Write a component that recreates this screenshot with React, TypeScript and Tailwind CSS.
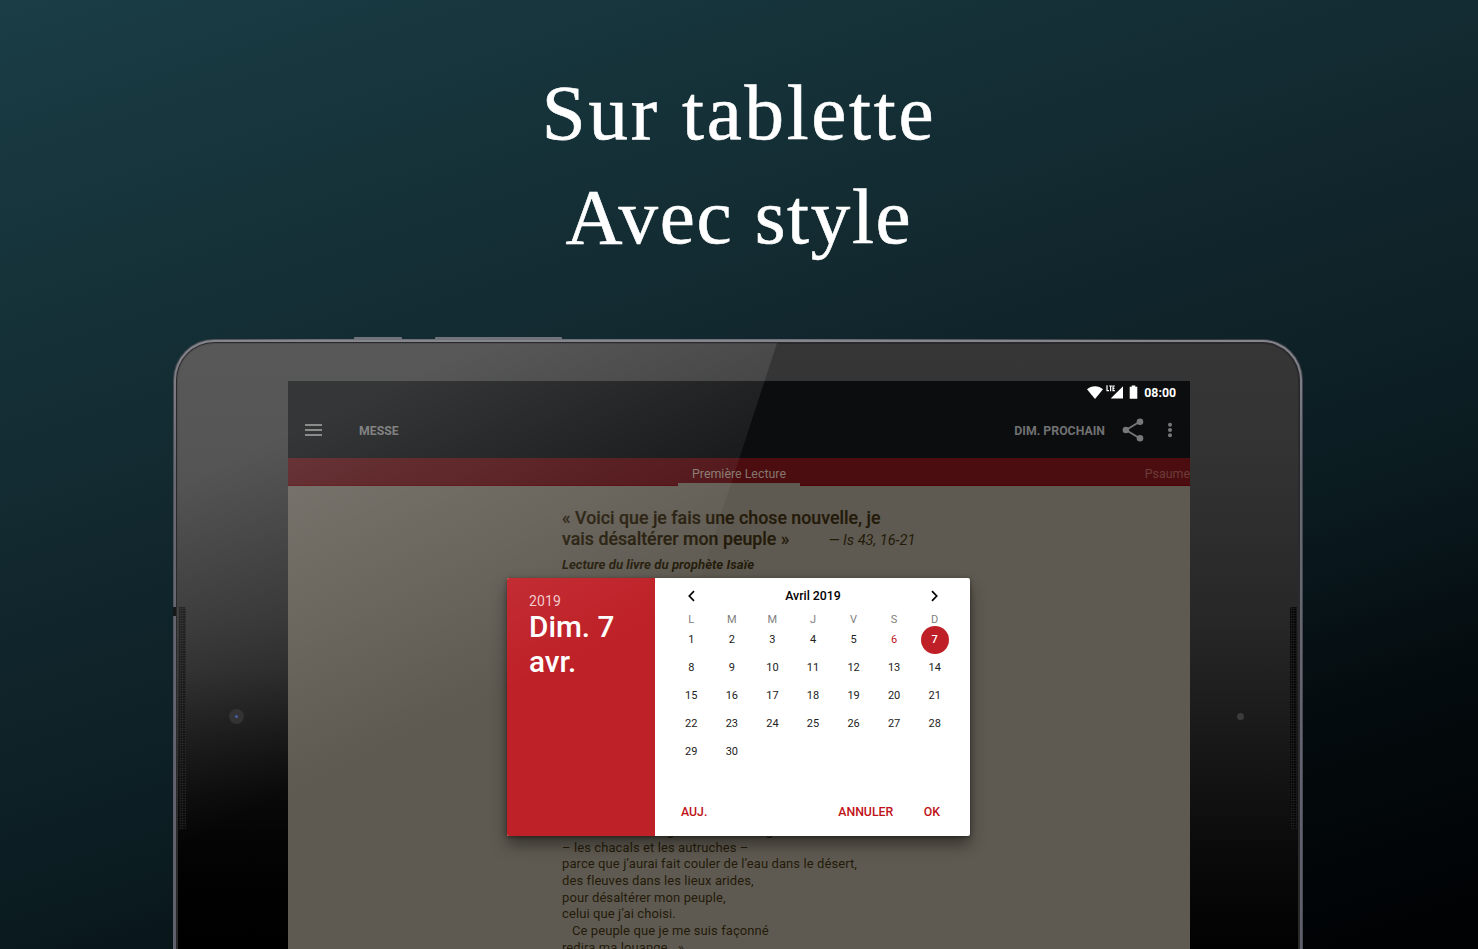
import React from "react";

const WEEKDAYS = ["L", "M", "M", "J", "V", "S", "D"];
const DAYS = Array.from({ length: 30 }, (_, i) => i + 1);

function dayClass(day: number) {
  if (day === 7) return "bg-[#bf2028] text-white font-medium";
  if (day === 6) return "text-[#bf2028]";
  return "text-[#222222]";
}

function StatusBar() {
  return (
    <div className="flex h-[22px] shrink-0 items-center justify-end pr-[14px] text-white">
      <svg className="mr-[3px] h-[13px] w-[16px]" viewBox="0 0 16 13" fill="currentColor">
        <path d="M0 3.2C2.3 1.2 5 .2 8 .2s5.700 1 8 3L8 13z" />
      </svg>
      <svg className="mr-[5px] h-[14px] w-[18px]" viewBox="0 0 18 14" fill="currentColor">
        <path d="M17 1.200V13.500H4.700z" />
        <path d="M0 0H9V7H0z" fill="#0c0d0e" />
        <path d="M1 .3V5.700H3M3.200 1H6M4.600 1V6.200M8.800 1H7V5.700H8.800M7 3.400H8.500" fill="none" stroke="currentColor" strokeWidth="1.200" />
      </svg>
      <svg className="mr-[6px] h-[14px] w-[9px]" viewBox="0 0 9 14" fill="currentColor">
        <path d="M2.700.4H6.300V1.700H8.300V13.300Q8.300 13.800 7.800 13.800H1.200Q.7 13.800.7 13.300V1.700H2.700z" />
      </svg>
      <span className="pt-px text-[12.300px] font-bold leading-[14px]">08:00</span>
    </div>
  );
}

function Toolbar() {
  return (
    <div className="flex h-[55px] shrink-0 items-center pl-[17px] pr-[17px] text-[12.300px] font-bold text-[#707172]">
      <svg className="mb-px h-[12px] w-[17px]" viewBox="0 0 17 12" fill="#737474">
        <path d="M0 0H17V2H0zM0 5H17V7H0zM0 10H17V12H0z" />
      </svg>
      <span className="ml-[37px] pt-[2px] text-[#6b6c6c]">MESSE</span>
      <span className="ml-auto pt-[2px]">DIM. PROCHAIN</span>
      <svg className="mb-px ml-[17px] h-[24px] w-[22px]" viewBox="0 0 22 24">
        <path d="M18 3.600 4 12 18 20.400" fill="none" stroke="#77787a" strokeWidth="1.800" />
        <circle cx="18" cy="3.700" r="3.300" fill="#77787a" />
        <circle cx="3.900" cy="12" r="3.300" fill="#77787a" />
        <circle cx="18" cy="20.300" r="3.300" fill="#77787a" />
      </svg>
      <svg className="mb-px ml-[23px] h-[16px] w-[6px]" viewBox="0 0 6 16" fill="#77787a">
        <circle cx="3" cy="2.800" r="2" />
        <circle cx="3" cy="8" r="2" />
        <circle cx="3" cy="13.200" r="2" />
      </svg>
    </div>
  );
}

function Tabs() {
  return (
    <div className="grid h-[28px] shrink-0 grid-cols-[390px_122px_1fr] overflow-hidden bg-[#4b0d10] text-[12.400px] leading-[31px]">
      <span className="h-[28px] border-b border-[#4f0005]" />
      <span className="h-[28px] border-b-[3px] border-[#5f5a51] text-center text-[#85766d]">Première Lecture</span>
      <span className="h-[28px] border-b border-[#4f0005] text-right text-[#6b3c38]">Psaume</span>
    </div>
  );
}

function Reading() {
  return (
    <article className="flex-1 bg-[#5f5a51] pl-[274px] pt-[21px] text-[#231a0a]">
      <h2 className="text-[17.800px] font-medium leading-[21px] [-webkit-text-stroke:0.200px_#231a0a]">
        <span className="block whitespace-nowrap">« Voici que je fais une chose nouvelle, je</span>
        <span className="flex items-baseline whitespace-nowrap">
          vais désaltérer mon peuple »
          <em className="ml-[39px] text-[14.500px] font-normal [-webkit-text-stroke:0]">— Is 43, 16-21</em>
        </span>
      </h2>
      <p className="mt-[5px] text-[13.200px] font-bold italic leading-[17px]">Lecture du livre du prophète Isaïe</p>
      <div className="mt-[250px] text-[13px] leading-[16.650px] tracking-[0.090px]">
        <p className="pl-[10px]">Les bêtes sauvages me rendront gloire</p>
        <p>– les chacals et les autruches –</p>
        <p>parce que j’aurai fait couler de l’eau dans le désert,</p>
        <p>des fleuves dans les lieux arides,</p>
        <p>pour désaltérer mon peuple,</p>
        <p>celui que j’ai choisi.</p>
        <p className="pl-[10px]">Ce peuple que je me suis façonné</p>
        <p>redira ma louange.&nbsp;&nbsp;»</p>
      </div>
    </article>
  );
}

function DatePicker() {
  return (
    <div className="absolute left-[219px] top-[197px] flex h-[258px] w-[463px] overflow-hidden rounded-[2px] bg-white shadow-[0_9px_16px_rgba(0,0,0,0.42),0_1px_4px_rgba(0,0,0,0.400)]">
      <div className="w-[148px] bg-[#bf2128] pl-[22px] pt-[14px]">
        <div className="pt-px text-[14px] leading-[16px] tracking-[0.100px] text-[#f0c8ca]">2019</div>
        <div className="text-[29.700px] font-medium leading-[35px] text-white">
          Dim. 7
          <br />
          avr.
        </div>
      </div>
      <div className="flex flex-1 flex-col pl-[16px] pr-[15px]">
        <div className="flex h-[36px] items-center justify-between px-[16px] text-black">
          <svg className="h-[12px] w-[9px]" viewBox="0 0 9 12">
            <path d="M7 1.200 2.300 6 7 10.800" fill="none" stroke="currentColor" strokeWidth="1.700" />
          </svg>
          <span className="text-[12.300px] font-medium">Avril 2019</span>
          <svg className="h-[12px] w-[9px]" viewBox="0 0 9 12">
            <path d="M2 1.200 6.700 6 2 10.800" fill="none" stroke="currentColor" strokeWidth="1.700" />
          </svg>
        </div>
        <div className="grid grid-cols-7 text-center text-[11px] leading-[12px] text-[#808080]">
          {WEEKDAYS.map((d, i) => (
            <span key={i}>{d}</span>
          ))}
        </div>
        <div className="grid grid-cols-7 justify-items-center text-[11px]">
          {DAYS.map((d) => (
            <span key={d} className={`flex h-[28px] w-[28px] items-center justify-center rounded-full ${dayClass(d)}`}>
              {d}
            </span>
          ))}
        </div>
        <div className="mb-[15px] mt-auto flex pl-[10px] pr-[15px] text-[12.300px] font-medium leading-[18px] text-[#bf1118]">
          <span>AUJ.</span>
          <span className="ml-auto">ANNULER</span>
          <span className="ml-[30.500px]">OK</span>
        </div>
      </div>
    </div>
  );
}

function Speaker({ side }: { side: "left" | "right" }) {
  return (
    <div
      className={`absolute top-[268px] h-[222px] w-[7px] bg-[#050505] bg-[radial-gradient(circle,#2e2e2e_0.6px,transparent_1px)] bg-[length:2.500px_2.500px] ${
        side === "left" ? "left-[6px] rounded-r-[2px]" : "right-[6px] rounded-l-[2px]"
      }`}
    />
  );
}

function Tablet() {
  return (
    <div className="relative ml-[173px] w-[1130px] shrink-0 self-start">
      <div className="absolute left-[181px] top-[-2px] h-[3px] w-[48px] rounded-t-[1px] bg-[#70737a]" />
      <div className="absolute left-[262px] top-[-2px] h-[3px] w-[127px] rounded-t-[1px] bg-[#70737a]" />
      <div className="h-[660px] rounded-t-[41px] bg-[linear-gradient(100deg,#45474d,#6f7078_12%,#6f7078_50%,#34363e_80%,#4c4c56)] p-[1px]">
        <div className="h-full rounded-t-[40px] bg-[linear-gradient(#85858d,#6a6a75_20%,#5c5e69)] p-[2px] pb-0">
          <div className="h-full rounded-t-[38px] bg-[#2a2a2c] p-[2px] pb-0">
            <div className="h-full rounded-t-[36px] bg-[linear-gradient(#363636,#333333_16%,#272727_42%,#0a0a0a_78%,#020202_92%)] pl-[110px] pt-[37px]">
              <div className="relative flex h-[580px] w-[902px] flex-col overflow-hidden bg-[#0c0d0e]">
                <StatusBar />
                <Toolbar />
                <Tabs />
                <Reading />
                <DatePicker />
              </div>
            </div>
          </div>
        </div>
      </div>
      <div className="absolute left-[5px] top-[330px] h-[280px] w-[110px] bg-[linear-gradient(transparent,rgba(0,0,0,0.7)_70%,black)]" />
      <Speaker side="left" />
      <Speaker side="right" />
      <div className="absolute left-0 top-[268px] h-[9px] w-[3px] bg-[#17181a]" />
      <div className="absolute left-[56px] top-[370px] flex h-[15px] w-[15px] items-center justify-center rounded-full bg-[#29292b]">
        <span className="h-[3px] w-[3px] rounded-full bg-[#4356a0]" />
      </div>
      <div className="absolute left-[1064px] top-[374px] h-[7px] w-[7px] rounded-full bg-[#3b3b3b]" />
      <svg className="pointer-events-none absolute left-0 top-0 h-[610px] w-[1130px]" viewBox="0 0 1130 610">
        <defs>
          <linearGradient id="glare" gradientUnits="userSpaceOnUse" x1="7" y1="6" x2="202" y2="414">
            <stop offset="0" stopColor="white" stopOpacity="0.170" />
            <stop offset="0.280" stopColor="white" stopOpacity="0.170" />
            <stop offset="1" stopColor="white" stopOpacity="0" />
          </linearGradient>
        </defs>
        <path d="M4 610V41A37 37 0 0 1 41 4H604L406 610z" fill="url(#glare)" />
      </svg>
    </div>
  );
}

export default function App() {
  return (
    <main className="flex h-[949px] w-[1478px] flex-col items-center overflow-hidden bg-[linear-gradient(162deg,#1a3d46_0%,#12292f_38%,#0b1c21_64%,#040b0e_80%,#000203_98%)] font-['Roboto',sans-serif]">
      <h1 className="flex h-[339px] shrink-0 flex-col items-center pt-[61px] font-['Liberation_Serif',serif] text-[79px] leading-[104px] text-white [-webkit-text-stroke:0.600px_white]">
        <span className="tracking-[2.700px]">Sur tablette</span>
        <span className="tracking-[1.700px]">Avec style</span>
      </h1>
      <Tablet />
    </main>
  );
}
